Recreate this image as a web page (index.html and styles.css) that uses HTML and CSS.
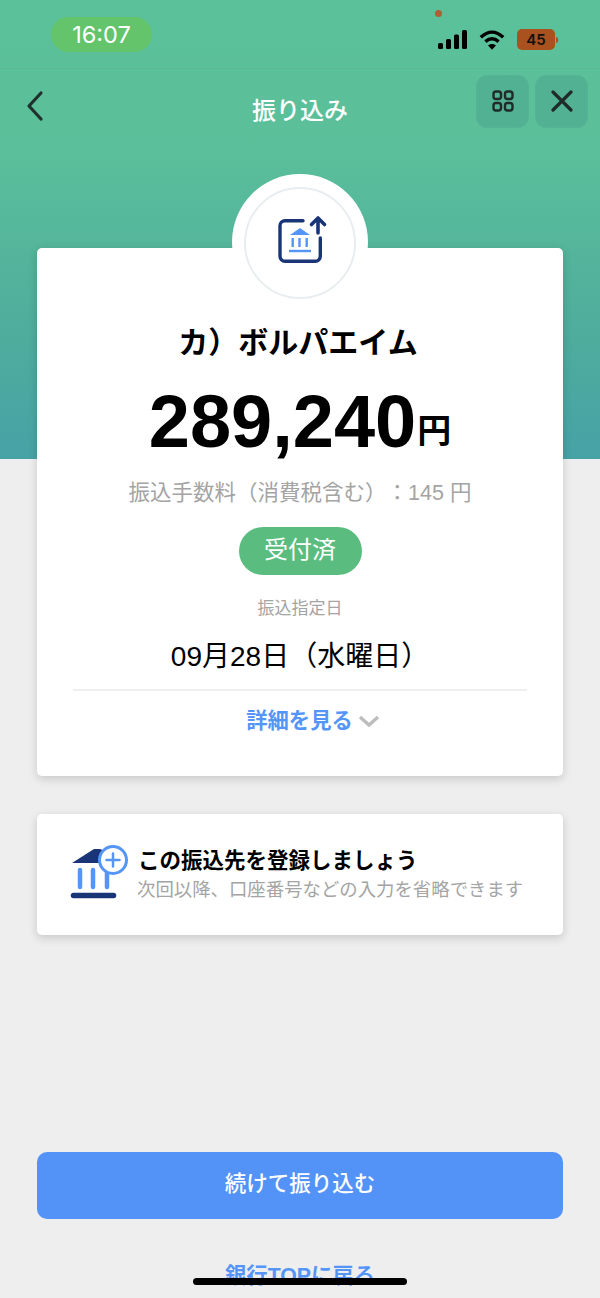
FILE: index.html
```html
<!DOCTYPE html>
<html lang="ja">
<head>
<meta charset="utf-8">
<title>振り込み</title>
<link rel="stylesheet" href="styles.css">
</head>
<body>
<div class="page">
  <div class="status">
    <div class="time">16:07</div>
    <div class="status-right">
      <svg class="signal" viewBox="0 0 30 19" width="30" height="19"><rect x="0" y="13" width="5" height="6" rx="1.500"/><rect x="8" y="9" width="5" height="10" rx="1.500"/><rect x="16" y="4.500" width="5" height="14.500" rx="1.500"/><rect x="24" y="0" width="5" height="19" rx="1.500"/></svg>
      <svg class="wifi" viewBox="0 0 26 20" width="26" height="20"><path d="M1.800 7.200C9 .4 17 .4 24.200 7.200" fill="none" stroke="#000" stroke-width="3.400"/><path d="M6.400 11.600c4.400-3.800 8.800-3.800 13.200 0" fill="none" stroke="#000" stroke-width="3.400"/><path d="M13 19.800l-4-4.400c2.600-1.900 5.400-1.900 8 0z"/></svg>
      <div class="battery">45</div><span class="battery-tip"></span>
    </div>
    <span class="dot"></span>
  </div>
  <header class="nav">
    <svg class="back" viewBox="0 0 18 32" width="18" height="32"><path d="M15 3 3 16l12 13" fill="none" stroke="#20302c" stroke-width="3.200" stroke-linecap="round" stroke-linejoin="round"/></svg>
    <h1 class="title">振り込み</h1>
    <div class="nav-actions">
      <div class="nav-btn"><svg viewBox="0 0 22 22" width="22" height="22" fill="none" stroke="#1e2b28" stroke-width="2.400"><rect x="1.500" y="1.500" width="7.500" height="7.500" rx="2.500"/><rect x="13" y="1.500" width="7.500" height="7.500" rx="2.500"/><rect x="1.500" y="13" width="7.500" height="7.500" rx="2.500"/><rect x="13" y="13" width="7.500" height="7.500" rx="2.500"/></svg></div>
      <div class="nav-btn"><svg viewBox="0 0 22 22" width="22" height="22" fill="none" stroke="#1e2b28" stroke-width="3.200" stroke-linecap="round"><path d="M2 2l18 18M20 2 2 20"/></svg></div>
    </div>
  </header>

  <main class="content">
    <section class="card main-card">
      <div class="badge-wrap">
        <div class="badge-ring">
          <svg class="badge-icon" viewBox="0 0 52 50" width="52" height="50">
            <path d="M26 5.700H8a5 5 0 0 0-5 5v30.600a5 5 0 0 0 5 5h30.300a5 5 0 0 0 5-5V23" fill="none" stroke="#1a3478" stroke-width="3.400" stroke-linecap="round"/>
            <path d="M41 18V3M34.500 9.500 41 3l6.500 6.500" fill="none" stroke="#1a3478" stroke-width="3.600" stroke-linecap="round" stroke-linejoin="round"/>
            <path d="M13 20 23 13l10 7z" fill="#5595f7"/>
            <path d="M15.700 23v9M22.500 23v9M29.700 23v9" stroke="#5595f7" stroke-width="2.400" fill="none"/>
            <path d="M12 36h22" stroke="#5595f7" stroke-width="2.400" fill="none"/>
          </svg>
        </div>
      </div>
      <h2 class="payee">カ）ボルパエイム</h2>
      <div class="amount"><span class="amount-num">289,240</span><span class="amount-unit">円</span></div>
      <p class="fee">振込手数料（消費税含む）：145 円</p>
      <div class="pill">受付済</div>
      <p class="date-label">振込指定日</p>
      <p class="date">09月28日（水曜日）</p>
      <div class="divider"></div>
      <div class="details">
        <span class="details-text">詳細を見る</span>
        <svg viewBox="0 0 22 12" width="22" height="12"><path d="M2 2l9 8 9-8" fill="none" stroke="#bdbdbd" stroke-width="3.400"/></svg>
      </div>
    </section>

    <section class="card reg-card">
      <svg class="reg-icon" viewBox="0 0 60 58" width="60" height="58">
        <path d="M3 20 25 6h6l10 4-4 10z" fill="#1a3478"/>
        <path d="M11 27v17M24 27v17M38 30v14" stroke="#5595f7" stroke-width="4.500" stroke-linecap="round"/>
        <path d="M4.500 52.500h40" stroke="#1a3478" stroke-width="5.500" stroke-linecap="round"/>
        <circle cx="44" cy="17" r="13.500" fill="#fff" stroke="#5595f7" stroke-width="3"/>
        <path d="M44 10.500v13M37.500 17h13" stroke="#5595f7" stroke-width="2.500" stroke-linecap="round"/>
      </svg>
      <div class="reg-text">
        <div class="reg-title">この振込先を登録しましょう</div>
        <div class="reg-sub">次回以降、口座番号などの入力を省略できます</div>
      </div>
    </section>

    <button class="primary">続けて振り込む</button>
    <div class="link">銀行TOPに戻る</div>
  </main>
  <div class="home-bar"></div>
</div>
</body>
</html>
```
FILE: styles.css
```css
* { box-sizing: border-box; margin: 0; padding: 0; }
html, body { width: 600px; height: 1298px; overflow: hidden; }
body {
  font-family: "Liberation Sans", "Noto Sans CJK JP", sans-serif;
  background: #eeeeee;
  text-spacing-trim: space-all;
}
.page {
  position: relative;
  width: 600px;
  height: 1298px;
  overflow: hidden;
  background: linear-gradient(180deg, #5bc19a 0%, #5bc09a 30%, #4fae9c 70%, #47a2a6 100%) 0 0 / 100% 459px no-repeat, #eeeeee;
}
.status {
  position: relative;
  height: 69px;
  display: flex;
  align-items: flex-start;
  justify-content: space-between;
  border-bottom: 1px solid #5ab896;
  padding: 17px 42px 0 51px;
}
.time {
  width: 101px;
  height: 35px;
  border-radius: 18px;
  background: #63c46c;
  color: #fff;
  font-family: "Inter", sans-serif;
  font-size: 23.500px;
  line-height: 35px;
  text-align: center;
}
.status-right {
  display: flex;
  align-items: center;
  margin-top: 12px;
}
.signal { fill: #000; margin-right: 11px; }
.wifi { fill: #000; margin-right: 12px; }
.battery {
  width: 38px;
  height: 21px;
  border-radius: 5px;
  background: #a9521f;
  color: #111;
  font-family: "Inter", sans-serif;
  font-size: 15px;
  font-weight: 600;
  line-height: 21px;
  text-align: center;
}
.battery-tip {
  width: 2px;
  height: 6px;
  margin-left: 1px;
  border-radius: 0 2px 2px 0;
  background: #a9521f;
}
.dot {
  position: absolute;
  left: 435px;
  top: 10px;
  width: 7px;
  height: 7px;
  border-radius: 50%;
  background: #ac6035;
}
.nav {
  display: flex;
  align-items: center;
  justify-content: space-between;
  height: 59px;
  padding: 6px 12px 0 27px;
  position: relative;
}
.back { margin-top: 9px; margin-left: -1px; }
.title {
  position: absolute;
  left: 0;
  right: 0;
  top: 27px;
  text-align: center;
  color: #fff;
  font-size: 24px;
  line-height: 30px;
  font-weight: 500;
}
.nav-actions { display: flex; gap: 6px; position: relative; margin-top: -1px; }
.nav-btn {
  width: 53px;
  height: 53px;
  border-radius: 11px;
  background: #52b193;
  border: 1px solid #54b394;
  display: flex;
  align-items: center;
  justify-content: center;
}
.content {
  padding: 0 37px;
  display: flex;
  flex-direction: column;
  align-items: stretch;
  margin-top: 120px;
}
.card {
  background: #fff;
  border-radius: 5px;
  box-shadow: 0 3px 10px rgba(0, 0, 0, 0.16);
}
.main-card {
  position: relative;
  height: 528px;
  display: flex;
  flex-direction: column;
  align-items: center;
  padding: 0 36px;
}
.badge-wrap {
  position: absolute;
  left: 195px;
  top: -74px;
  width: 136px;
  height: 136px;
  border-radius: 50%;
  background: #fff;
  display: flex;
  align-items: center;
  justify-content: center;
}
.badge-ring {
  width: 112px;
  height: 112px;
  margin-top: 2px;
  border-radius: 50%;
  border: 2px solid #e8edf0;
  display: flex;
  align-items: center;
  justify-content: center;
}
.badge-icon { margin-left: 5px; margin-bottom: 6px; }
.payee {
  margin-top: 75px;
  margin-right: 4px;
  font-size: 30px;
  line-height: 40px;
  font-weight: 700;
  color: #000;
}
.amount {
  margin-top: 22px;
  color: #000;
  height: 74px;
  line-height: 74px;
  white-space: nowrap;
}
.amount-num {
  font-size: 74px;
  font-weight: 700;
}
.amount-unit {
  font-size: 34px;
  font-weight: 700;
  margin-left: 1px;
  vertical-align: 4px;
}
.fee {
  margin-top: 19px;
  font-size: 21.500px;
  line-height: 30px;
  color: #a4a4a4;
}
.pill {
  margin-top: 19px;
  width: 123px;
  height: 48px;
  border-radius: 24px;
  background: #5abd7f;
  color: #fff;
  font-size: 24px;
  line-height: 46px;
  text-align: center;
}
.date-label {
  margin-top: 20px;
  font-size: 17px;
  line-height: 28px;
  color: #a4a4a4;
}
.date {
  margin-top: 15px;
  font-size: 28px;
  line-height: 38px;
  color: #000;
}
.divider {
  margin-top: 13px;
  width: 100%;
  height: 2px;
  background: #efefef;
}
.details {
  margin-top: 12px;
  display: flex;
  align-items: center;
  gap: 5px;
  margin-left: 26px;
}
.details-text {
  color: #5595f7;
  font-size: 21.300px;
  line-height: 36px;
  font-weight: 700;
}
.reg-card {
  margin-top: 38px;
  height: 121px;
  display: flex;
  align-items: center;
  padding: 0 32px;
}
.reg-icon { flex: none; align-self: flex-start; margin-top: 29px; margin-right: 8px; }
.reg-title {
  font-size: 21.500px;
  line-height: 28px;
  font-weight: 700;
  color: #000;
  margin-left: 1px;
}
.reg-sub {
  margin-top: 2px;
  font-size: 18.400px;
  line-height: 26px;
  color: #a4a4a4;
  white-space: nowrap;
}
.primary {
  margin-top: 217px;
  height: 67px;
  border: 0;
  border-radius: 10px;
  background: #5393f8;
  color: #fff;
  font: 500 21.500px "Liberation Sans", "Noto Sans CJK JP", sans-serif;
  padding-bottom: 8px;
}
.link {
  margin-top: 42px;
  text-align: center;
  color: #5595f7;
  font-size: 21.300px;
  line-height: 30px;
  font-weight: 700;
}
.home-bar {
  position: absolute;
  left: 193px;
  top: 1278px;
  width: 214px;
  height: 7px;
  border-radius: 4px;
  background: #000;
}
```
